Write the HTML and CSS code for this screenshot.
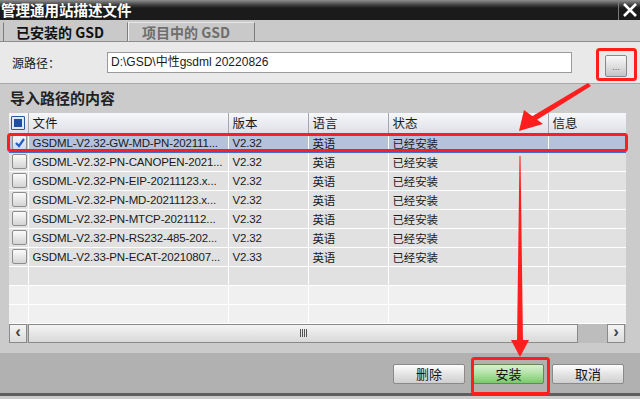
FILE: index.html
```html
<!DOCTYPE html>
<html lang="zh-CN">
<head>
    <meta charset="UTF-8">
    <title>管理通用站描述文件</title>
    <link rel="stylesheet" href="styles.css">
</head>
<body>
    <div class="window">
        <!-- Title bar -->
        <div class="titlebar">
            <span class="title">管理通用站描述文件</span>
            <span class="close">
                <svg width="16" height="16" viewBox="0 0 16 16"><path d="M2 2 L14 14 M14 2 L2 14" stroke="#fff" stroke-width="2.6"/></svg>
            </span>
        </div>

        <!-- Tabs -->
        <div class="tabbar">
            <div class="tab active">已安装的 GSD</div>
            <div class="tab">项目中的 GSD</div>
        </div>

        <!-- Source path -->
        <div class="source">
            <span class="label">源路径：</span>
            <div class="path">D:\GSD\中性gsdml 20220826</div>
            <button class="browse">...</button>
        </div>

        <!-- Content of import path -->
        <div class="panel">
            <div class="heading">导入路径的内容</div>
            <table class="grid">
                <thead>
                    <tr>
                        <th class="c-cb"><span class="cb all"></span></th>
                        <th class="c-file">文件</th>
                        <th class="c-ver">版本</th>
                        <th class="c-lang">语言</th>
                        <th class="c-state">状态</th>
                        <th class="c-info">信息</th>
                    </tr>
                </thead>
                <tbody>
                    <tr class="selected">
                        <td><span class="cb checked"><svg width="12" height="12" viewBox="0 0 12 12"><path d="M2 6 L5 9 L10 2" fill="none" stroke="#1f5fc8" stroke-width="2.2"/></svg></span></td>
                        <td>GSDML-V2.32-GW-MD-PN-202111...</td>
                        <td>V2.32</td>
                        <td>英语</td>
                        <td>已经安装</td>
                        <td></td>
                    </tr>
                    <tr>
                        <td><span class="cb"></span></td>
                        <td>GSDML-V2.32-PN-CANOPEN-2021...</td>
                        <td>V2.32</td>
                        <td>英语</td>
                        <td>已经安装</td>
                        <td></td>
                    </tr>
                    <tr>
                        <td><span class="cb"></span></td>
                        <td>GSDML-V2.32-PN-EIP-20211123.x...</td>
                        <td>V2.32</td>
                        <td>英语</td>
                        <td>已经安装</td>
                        <td></td>
                    </tr>
                    <tr>
                        <td><span class="cb"></span></td>
                        <td>GSDML-V2.32-PN-MD-20211123.x...</td>
                        <td>V2.32</td>
                        <td>英语</td>
                        <td>已经安装</td>
                        <td></td>
                    </tr>
                    <tr>
                        <td><span class="cb"></span></td>
                        <td>GSDML-V2.32-PN-MTCP-2021112...</td>
                        <td>V2.32</td>
                        <td>英语</td>
                        <td>已经安装</td>
                        <td></td>
                    </tr>
                    <tr>
                        <td><span class="cb"></span></td>
                        <td>GSDML-V2.32-PN-RS232-485-202...</td>
                        <td>V2.32</td>
                        <td>英语</td>
                        <td>已经安装</td>
                        <td></td>
                    </tr>
                    <tr>
                        <td><span class="cb"></span></td>
                        <td>GSDML-V2.33-PN-ECAT-20210807...</td>
                        <td>V2.33</td>
                        <td>英语</td>
                        <td>已经安装</td>
                        <td></td>
                    </tr>
                    <tr class="empty"><td></td><td></td><td></td><td></td><td></td><td></td></tr>
                    <tr class="empty light"><td></td><td></td><td></td><td></td><td></td><td></td></tr>
                    <tr class="empty light"><td></td><td></td><td></td><td></td><td></td><td></td></tr>
                </tbody>
            </table>
            <div class="hscroll">
                <span class="arrow-btn">&lsaquo;</span>
                <span class="track"><span class="grip"></span></span>
                <span class="gap"></span>
                <span class="arrow-btn">&rsaquo;</span>
            </div>
        </div>

        <!-- Buttons -->
        <div class="footer">
            <button class="btn">删除</button>
            <button class="btn green">安装</button>
            <button class="btn">取消</button>
        </div>

        <!-- Red annotations drawn over the dialog -->
        <svg class="marks" width="640" height="399" viewBox="0 0 640 399">
            <rect x="597.5" y="49.5" width="38" height="30" rx="2" fill="none" stroke="#ff1e1e" stroke-width="3"/>
            <rect x="8.5" y="134.5" width="618" height="16" rx="2" fill="none" stroke="#ff1e1e" stroke-width="3"/>
            <rect x="472.5" y="358.5" width="76" height="35" rx="2" fill="none" stroke="#ff1e1e" stroke-width="3"/>
            <polygon points="588,83 591,86 535,121 531,117" fill="#ff1e1e"/>
            <polygon points="519,131 524,110 543,124" fill="#ff1e1e"/>
            <polygon points="519.5,156 520.5,156 523,342 517,342" fill="#ff1e1e"/>
            <polygon points="511,340 529,340 520,357" fill="#ff1e1e"/>
        </svg>
    </div>
</body>
</html>
```

FILE: styles.css
```css
body {
    margin: 0;
    background: #b1b1b1;
    font-family: "Liberation Sans", "Noto Sans CJK SC", sans-serif;
    font-size: 12px;
    color: #1a1a1a;
}
.window {
    position: relative;
    width: 640px;
    height: 399px;
    overflow: hidden;
    background: #cbcbcb;
}
.titlebar {
    height: 20px;
    display: flex;
    justify-content: space-between;
    background: linear-gradient(#8e8e8e 0, #404040 5px, #1b1b1b 8px);
}
.title {
    color: #fff;
    font-family: "Noto Sans CJK SC", sans-serif;
    font-weight: bold;
    font-size: 14.5px;
    line-height: 20px;
    padding-left: 1px;
}
.close {
    width: 21px;
    display: flex;
    align-items: center;
    justify-content: center;
    border-left: 1px solid #7a7a7a;
}
.tabbar {
    height: 21px;
    display: flex;
    align-items: flex-end;
    padding-left: 3px;
    background: #c9c9c9;
    border-bottom: 1px solid #8c8c8c;
}
.tab {
    width: 123px;
    height: 19px;
    line-height: 19px;
    padding-left: 12px;
    box-sizing: border-box;
    font-family: "Noto Sans CJK SC", sans-serif;
    font-weight: bold;
    font-size: 14px;
    color: #6e6e6e;
    border-left: 1px solid #f2f2f2;
    border-right: 1px solid #7c7c7c;
    border-top: 1px solid #e6e6e6;
}
.tab + .tab {
    width: 127px;
    padding-left: 13px;
}
.tab.active {
    width: 125px;
    color: #111;
    border-left: 1px solid #7c7c7c;
    border-top: 1px solid #c9c9c9;
}
.source {
    height: 42px;
    display: flex;
    align-items: center;
    background: #e9e9e9;
    border-bottom: 1px solid #a9a9a9;
    box-sizing: border-box;
}
.label {
    width: 95px;
    padding-left: 12px;
    font-family: "Noto Sans CJK SC", sans-serif;
    font-size: 12px;
}
.path {
    width: 465px;
    height: 21px;
    box-sizing: border-box;
    line-height: 19px;
    padding-left: 3px;
    background: #fff;
    border: 1px solid #9a9a9a;
    font-size: 12px;
}
.browse {
    width: 22px;
    height: 22px;
    margin: 6px 0 0 33px;
    padding: 0;
    font-size: 9px;
    line-height: 22px;
    color: #555;
    border: 1px solid #8a8a8a;
    border-radius: 2px;
    background: linear-gradient(#f8f8f8, #e0e0e0 50%, #c4c4c4);
}
.panel {
    height: 269px;
    padding-left: 9px;
    background: #cbcbcb;
}
.heading {
    height: 29px;
    line-height: 27px;
    padding-left: 1px;
    font-family: "Noto Sans CJK SC", sans-serif;
    font-weight: bold;
    font-size: 15px;
    color: #222;
}
.grid {
    width: 617px;
    border-collapse: collapse;
    table-layout: fixed;
}
.grid th,
.grid td {
    box-sizing: border-box;
}
.grid th {
    height: 20px;
    padding: 0 0 0 4px;
    text-align: left;
    font-family: "Noto Sans CJK SC", sans-serif;
    font-weight: normal;
    font-size: 12.5px;
    background: linear-gradient(#f6f7fa, #dde0e7);
    border-right: 1px solid #a6a9b0;
    border-bottom: 1px solid #b7bac2;
}
.grid td {
    height: 19px;
    padding: 0 0 0 4px;
    background: #e1e1e1;
    border-right: 1px solid #fff;
    border-bottom: 1px solid #fff;
    white-space: nowrap;
    overflow: hidden;
    font-size: 11.5px;
    letter-spacing: -0.15px;
}
.grid th:last-child,
.grid td:last-child {
    border-right: none;
}
.grid .c-cb { width: 19px; padding: 0; }
.grid .c-file { width: 200px; }
.grid .c-ver { width: 80px; }
.grid .c-lang { width: 80px; }
.grid .c-state { width: 160px; }
.grid td:first-child { padding: 0 0 0 3px; }
.grid tr.selected td {
    background: #b4c2dc;
    border-bottom: 1px solid #3d6fd0;
}
.grid tr.empty.light td {
    background: #f0f0f0;
}
.cb {
    display: block;
    width: 13px;
    height: 13px;
    border: 1px solid #8e8e8e;
    border-radius: 2px;
    background: linear-gradient(#fbfbfb, #d4d4d4);
}
.cb.all {
    margin-left: 2px;
    width: 12px;
    height: 12px;
    border: 1px solid #2c5aa0;
    border-radius: 1px;
    background: #1e4f9e;
    box-shadow: inset 0 0 0 2px #dfe7f3;
}
.cb.checked {
    background: linear-gradient(#f2f6fb, #cfdcec);
    display: flex;
    align-items: center;
    justify-content: center;
}
.hscroll {
    width: 617px;
    height: 19px;
    display: flex;
    background: #bdbdbd;
}
.arrow-btn {
    width: 16px;
    height: 17px;
    border: 1px solid #8a8a8a;
    background: linear-gradient(#f4f4f4, #dcdcdc);
    text-align: center;
    font-size: 17px;
    font-weight: bold;
    line-height: 14px;
    color: #444;
}
.track {
    width: 548px;
    height: 17px;
    margin-left: 1px;
    border: 1px solid #8a8a8a;
    background: linear-gradient(#f4f4f4, #d9d9d9);
    display: flex;
    align-items: center;
}
.grip {
    width: 8px;
    height: 8px;
    margin-left: 271px;
    background: repeating-linear-gradient(90deg, #555 0 1px, transparent 1px 2px);
}
.gap {
    width: 29px;
}
.footer {
    height: 43px;
    display: flex;
    justify-content: flex-end;
    align-items: flex-start;
    gap: 8px;
    padding: 11px 16px 0 0;
    box-sizing: border-box;
    background: #b1b1b1;
    border-bottom: 3px solid #5e5e5e;
}
.btn {
    width: 72px;
    height: 20px;
    padding: 0;
    font-family: "Noto Sans CJK SC", sans-serif;
    font-size: 13px;
    line-height: 18px;
    color: #111;
    border: 1px solid #8a8a8a;
    border-radius: 2px;
    background: linear-gradient(#fdfdfd, #e4e4e4 50%, #cfcfcf);
}
.btn.green {
    width: 71px;
    border-color: #5d8c55;
    background: linear-gradient(#d8f0d2, #b4e2a8 45%, #79c96a);
}
.marks {
    position: absolute;
    left: 0;
    top: 0;
    pointer-events: none;
}
```
